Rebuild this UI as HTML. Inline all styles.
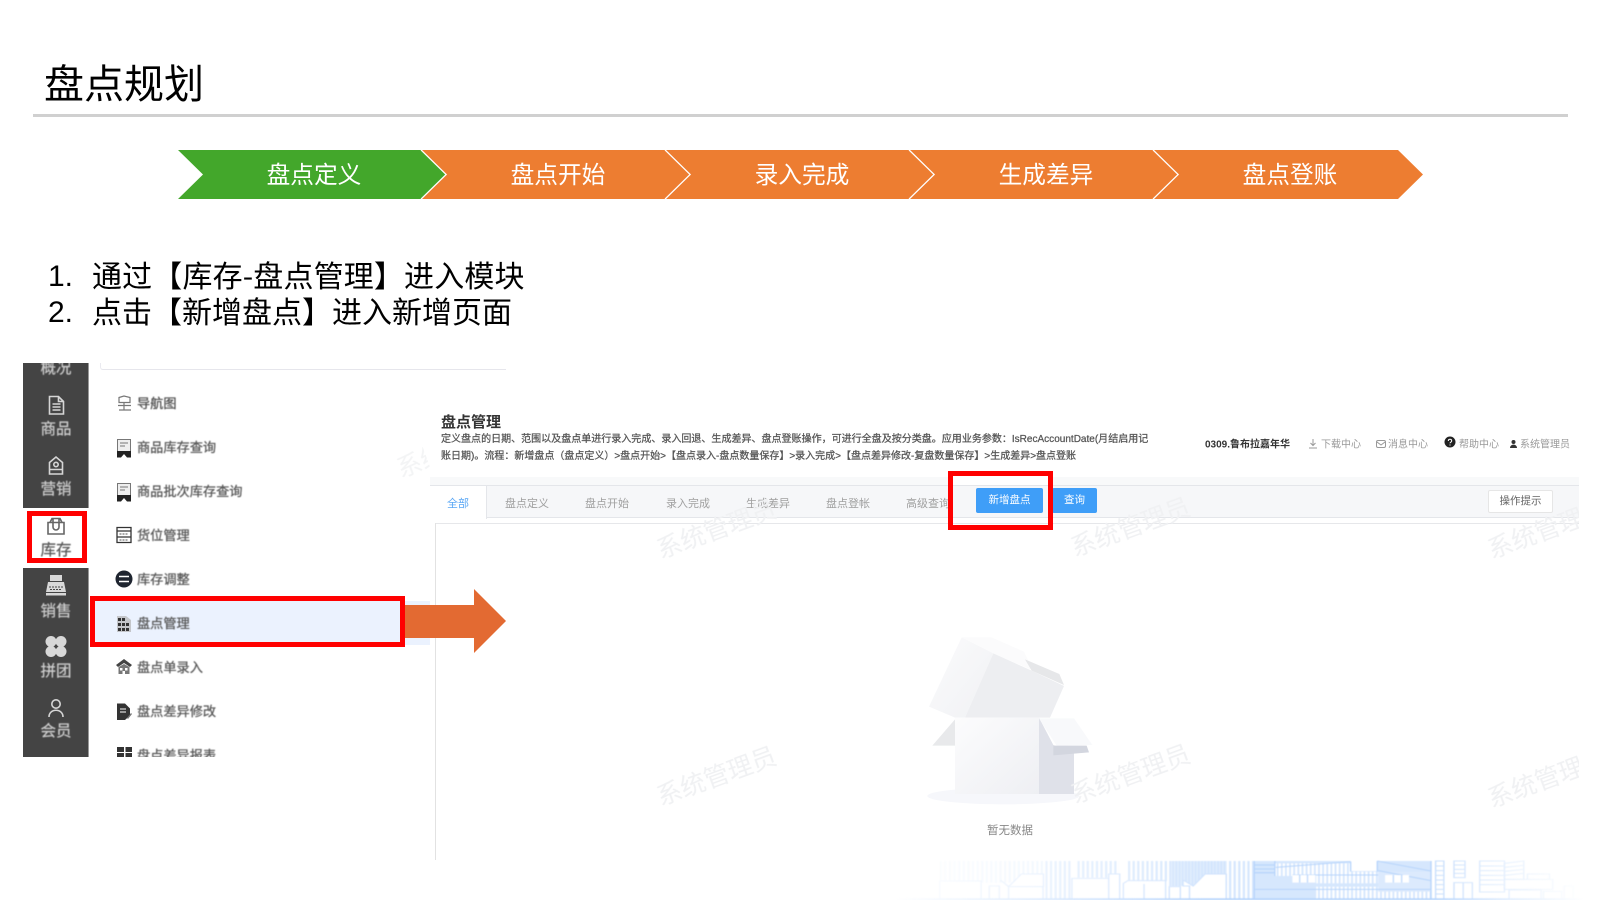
<!DOCTYPE html>
<html lang="zh"><head><meta charset="utf-8"><title>盘点规划</title>
<style>
html,body{margin:0;padding:0;background:#fff}
#p{position:relative;width:1600px;height:900px;overflow:hidden;background:#fff;font-family:"Liberation Sans","Noto Sans CJK SC",sans-serif}
.a{position:absolute;white-space:nowrap}
.c{transform:translate(-50%,-50%)}
.s{position:absolute;left:23px;width:66px;background:#444;border-right:1px solid #999;box-sizing:border-box;overflow:hidden}
.sl{position:absolute;left:56px;font-size:15.5px;line-height:20px;color:#cfcfcf;transform:translate(-50%,-50%);white-space:nowrap;filter:blur(.4px);-webkit-text-stroke:.2px #cfcfcf}
.m{position:absolute;left:137px;font-size:13.2px;line-height:18px;color:#555;transform:translateY(-50%);white-space:nowrap;filter:blur(.4px);-webkit-text-stroke:.25px #555}
.wm{position:absolute;font-size:25px;color:#f0f1f3;transform:translate(-50%,-50%) rotate(-20deg);white-space:nowrap;filter:blur(.3px)}
.tab{position:absolute;top:503px;font-size:11px;color:#a0a0a0;transform:translate(-50%,-50%);white-space:nowrap;filter:blur(.3px)}
.h{position:absolute;top:444px;font-size:10px;color:#999;transform:translateY(-50%);white-space:nowrap;filter:blur(.25px)}
.t{font-size:23.700px;color:#fff;font-family:'Noto Sans CJK SC',sans-serif;font-weight:400;top:173px}
svg{position:absolute;overflow:visible}
</style></head><body><div id="p">

<div class="a" style="left:44px;top:52px;font-size:40px;line-height:58px;color:#000;font-family:'Noto Sans CJK SC',sans-serif">盘点规划</div>
<div class="a" style="left:33px;top:114px;width:1535px;height:3px;background:#d0d0d0"></div>

<svg style="left:0;top:0" width="1600" height="260">
<polygon points="178,150 421,150 446,174.5 421,199 178,199 203,174.5" fill="#43a72b"/>
<polygon points="422,150 665,150 690,174.5 665,199 422,199 447,174.5" fill="#ed7d31"/>
<polygon points="666,150 909,150 934,174.5 909,199 666,199 691,174.5" fill="#ed7d31"/>
<polygon points="910,150 1153,150 1178,174.5 1153,199 910,199 935,174.5" fill="#ed7d31"/>
<polygon points="1154,150 1398,150 1423,174.5 1398,199 1154,199 1179,174.5" fill="#ed7d31"/>
<polyline points="421,150 446,174.5 421,199" fill="none" stroke="#fff" stroke-width="1.2"/>
<polyline points="665,150 690,174.5 665,199" fill="none" stroke="#fff" stroke-width="1.2"/>
<polyline points="909,150 934,174.5 909,199" fill="none" stroke="#fff" stroke-width="1.2"/>
<polyline points="1153,150 1178,174.5 1153,199" fill="none" stroke="#fff" stroke-width="1.2"/>
</svg>
<div class="a c t" style="left:314px">盘点定义</div>
<div class="a c t" style="left:558px">盘点开始</div>
<div class="a c t" style="left:802px">录入完成</div>
<div class="a c t" style="left:1046px">生成差异</div>
<div class="a c t" style="left:1290px">盘点登账</div>

<div class="a" style="left:48px;top:259px;font-size:30px;line-height:36px;color:#000;font-family:'Liberation Sans','Noto Sans CJK SC',sans-serif">1.</div>
<div class="a" style="left:92px;top:256px;font-size:30px;line-height:36px;color:#000;font-family:'Noto Sans CJK SC',sans-serif;letter-spacing:.15px">通过【库存-盘点管理】进入模块</div>
<div class="a" style="left:48px;top:295px;font-size:30px;line-height:36px;color:#000;font-family:'Liberation Sans','Noto Sans CJK SC',sans-serif">2.</div>
<div class="a" style="left:92px;top:292px;font-size:30px;line-height:36px;color:#000;font-family:'Noto Sans CJK SC',sans-serif">点击【新增盘点】进入新增页面</div>

<!-- sidebar -->
<div class="s" style="top:363px;height:145px"></div>
<div class="s" style="top:568px;height:189px"></div>
<div style="position:absolute;left:23px;top:363px;width:66px;height:20px;overflow:hidden"><div class="sl" style="left:33px;top:6px">概况</div></div>
<div class="sl" style="top:430px">商品</div>
<div class="sl" style="top:490px">营销</div>
<div class="sl" style="top:551px;color:#555;-webkit-text-stroke:.2px #555">库存</div>
<div class="sl" style="top:612px">销售</div>
<div class="sl" style="top:672px">拼团</div>
<div class="sl" style="top:732px">会员</div>

<svg style="left:0;top:0" width="100" height="760" fill="none" stroke="#d5d5d5" stroke-width="1.6">
<path d="M49.5 396.500h9l5 5v12.500h-14zM58.500 396.500v5h5M52.500 404h8M52.500 407h8M52.500 410h8"/>
<path d="M49.500 462.500l6.500-5.500 6.500 5.500v11.500h-13zM49.500 469.500h13"/><circle cx="56" cy="464.500" r="2.200"/>
<g stroke="#666"><path d="M48 522.500h16v11.500h-16zM50 522.500l2-4h8l2 4M53 518.500v8.500a3 3 0 0 0 6 0v-8.500"/></g>
<g fill="#d8d8d8" stroke="none">
<path d="M50 575h12v6h-12zM48 582h16l2 10h-20zM46 593h20v2.500h-20z"/>
<circle cx="51" cy="641.500" r="5.500"/><circle cx="61" cy="641.500" r="5.500"/><circle cx="51" cy="651.500" r="5.500"/><circle cx="61" cy="651.500" r="5.500"/>
</g>
<path d="M49 587h14M50 589.500h12" stroke="#444" stroke-width="1" stroke-dasharray="2 1"/>
<circle cx="56" cy="704" r="4.200"/><path d="M49 717c0-9 14-9 14 0"/>
</svg>

<!-- red 库存 box -->
<div class="a" style="left:27px;top:511px;width:60px;height:52px;border:5px solid #f00;box-sizing:border-box"></div>

<!-- top rule of menu -->
<div class="a" style="left:100px;top:363px;width:406px;height:7px;border-left:1px solid #eaeaf0;border-bottom:1px solid #e6e6ec;border-bottom-left-radius:3px;box-sizing:border-box"></div>

<!-- highlight -->
<div class="a" style="left:95px;top:601px;width:335px;height:44px;background:#ebf2fe"></div>

<div class="m" style="top:404px;color:#444">导航图</div>
<div class="m" style="top:448px">商品库存查询</div>
<div class="m" style="top:492px">商品批次库存查询</div>
<div class="m" style="top:536px">货位管理</div>
<div class="m" style="top:580px">库存调整</div>
<div class="m" style="top:624px">盘点管理</div>
<div class="m" style="top:668px">盘点单录入</div>
<div class="m" style="top:712px">盘点差异修改</div>
<div style="position:absolute;left:100px;top:740px;width:200px;height:17px;overflow:hidden"><div class="m" style="left:37px;top:16px">盘点差异报表</div></div>

<svg style="left:0;top:0" width="140" height="760">
<g fill="none" stroke="#777" stroke-width="1.200">
<path d="M119 397.500l5-1.500 6 1.500v5h-11zM118 405.500h13M119 410h12M124 403v7"/>
</g>
<g>
<path d="M117.500 439.500h13v12h-13z" fill="#eee" stroke="#777"/><path d="M120 443h8M120 446h5" stroke="#777"/><path d="M117 451h14v6.500h-4l-3-3.500-3 3.500h-4z" fill="#222"/>
<path d="M117.500 483.500h13v12h-13z" fill="#eee" stroke="#777"/><path d="M120 487h8M120 490h5" stroke="#777"/><path d="M117 495h14v6.500h-4l-3-3.500-3 3.500h-4z" fill="#222"/>
<path d="M117 527.500h14v15h-14zM117 531h14M117 537h14" fill="none" stroke="#333" stroke-width="1.300"/><path d="M119.500 534h9M119.500 540h9" stroke="#555" stroke-dasharray="2 1"/>
<circle cx="124" cy="579" r="8.500" fill="#1f2530"/><path d="M119 576.500h10M129 581.500h-10" stroke="#fff" stroke-width="1.600"/>
<path d="M117 616h9l5 4v12h-14z" fill="#c4c6ca"/><path d="M118 618h3v3h-3zM122 618h3v3h-3zM118 623h3v3h-3zM122 623h3v3h-3zM126 623h3v3h-3zM118 628h3v3h-3zM122 628h3v3h-3zM126 628h3v3h-3z" fill="#333"/>
<path d="M116 665l8-6 8 6-2 2-6-4-6 4z" fill="#444"/><path d="M118.500 667l5.500-3 5.500 3v7h-11z" fill="#777"/><path d="M120 668h2.500v2.500h-2.500zM125 668h2.500v2.500h-2.500zM122.500 671h2.500v3h-2.500z" fill="#fff"/>
<path d="M117 703.500h8l5 5v7l-5 4.500h-8z" fill="#333"/><path d="M120 709h6M120 712h6" stroke="#fff"/><path d="M127 718l4-5 1 1-4 5z" fill="#777"/>
<path d="M117 747h7v5h-7zM125.500 747h6.500v5h-6.500zM117 753h7v4h-7zM125.500 753h6.500v4h-6.500z" fill="#333"/>
</g>
</svg>

<!-- right page -->
<div class="wm" style="left:456px;top:447px;color:#f3f4f5;clip-path:inset(0 75% 0 0)">系统管理员</div>

<div class="a" style="left:441px;top:423px;font-size:15px;line-height:20px;font-weight:bold;color:#333;transform:translateY(-50%);filter:blur(.3px)">盘点管理</div>
<div class="a" style="left:441px;top:440px;font-size:10.030px;line-height:14px;color:#555;transform:translateY(-50%);-webkit-text-stroke:.25px #555;filter:blur(.25px)">定义盘点的日期、范围以及盘点单进行录入完成、录入回退、生成差异、盘点登账操作，可进行全盘及按分类盘。应用业务参数：IsRecAccountDate(月结启用记</div>
<div class="a" style="left:441px;top:457px;font-size:10px;line-height:14px;color:#555;transform:translateY(-50%);-webkit-text-stroke:.25px #555;filter:blur(.25px)">账日期)。流程：新增盘点（盘点定义）&gt;盘点开始&gt;【盘点录入-盘点数量保存】&gt;录入完成&gt;【盘点差异修改-复盘数量保存】&gt;生成差异&gt;盘点登账</div>

<div class="h" style="left:1205px;top:443px;color:#333;font-weight:bold;font-size:10px">0309.鲁布拉嘉年华</div>
<div class="h" style="left:1321px;top:443px">下载中心</div>
<div class="h" style="left:1388px;top:443px">消息中心</div>
<div class="h" style="left:1459px;top:443px">帮助中心</div>
<div class="h" style="left:1520px;top:443px">系统管理员</div>
<svg style="left:0;top:0" width="1600" height="460" fill="none" stroke="#999" stroke-width="1">
<path d="M1313 439v6M1310.500 443l2.500 2.500 2.500-2.500M1309 448h8"/>
<rect x="1376.500" y="440.500" width="9" height="7" rx="1.500"/><path d="M1377 442l4 3 4-3"/>
<circle cx="1450" cy="442" r="5.500" fill="#222" stroke="none"/><path d="M1448.300 441c0-2.300 3.400-2.300 3.400 0 0 1.200-1.700 1.200-1.700 2.300M1450 444.500v1" stroke="#fff"/>
<circle cx="1513.500" cy="442" r="2" fill="#333" stroke="none"/><path d="M1510 448c0-4.500 7-4.500 7 0z" fill="#333" stroke="none"/>
</svg>

<!-- tab bar -->
<div class="a" style="left:430px;top:477px;width:1149px;height:8px;background:#f8f9fa"></div>
<div class="a" style="left:430px;top:485px;width:1149px;height:33px;background:#f6f7f9;border-top:1px solid #e4e6ea;border-bottom:1px solid #e4e6ea;box-sizing:border-box"></div>
<div class="a" style="left:430px;top:485px;width:57px;height:34px;background:#fff;border-top:1px solid #e4e6ea;border-right:1px solid #e4e6ea;box-sizing:border-box"></div>
<div class="a" style="left:435px;top:523px;width:1144px;height:1px;background:#e6e7ea"></div>
<div class="a" style="left:435px;top:523px;width:1px;height:337px;background:#e2e2e2"></div>

<div class="tab" style="left:458px;color:#5aa7f5">全部</div>
<div class="tab" style="left:527px">盘点定义</div>
<div class="tab" style="left:607px">盘点开始</div>
<div class="tab" style="left:688px">录入完成</div>
<div class="tab" style="left:768px">生成差异</div>
<div class="tab" style="left:848px">盘点登帐</div>
<div class="tab" style="left:928px">高级查询</div>

<div class="wm" style="left:716px;top:528px">系统管理员</div>
<div class="wm" style="left:1130px;top:526px">系统管理员</div>
<div style="position:absolute;left:1460px;top:490px;width:119px;height:80px;overflow:hidden"><div class="wm" style="left:87px;top:38px">系统管理员</div></div>
<div class="wm" style="left:716px;top:775px">系统管理员</div>
<div style="position:absolute;left:1460px;top:730px;width:119px;height:90px;overflow:hidden"><div class="wm" style="left:87px;top:47px">系统管理员</div></div>

<div class="a" style="left:948px;top:471px;width:105px;height:14px;background:#fff"></div>
<div class="a" style="left:951px;top:485px;width:100px;height:33px;background:#f6f7f9;border-top:1px solid #e4e6ea;border-bottom:1px solid #e4e6ea;box-sizing:border-box"></div>
<div class="a" style="left:976px;top:488px;width:67px;height:25px;background:#3f9ef8;border-radius:2px;color:#fff;font-size:10.500px;line-height:25px;text-align:center;filter:blur(.25px)">新增盘点</div>
<div class="a" style="left:1052px;top:488px;width:45px;height:25px;background:#3f9ef8;border-radius:2px;color:#fff;font-size:10.500px;line-height:25px;text-align:center;filter:blur(.25px)">查询</div>
<div class="a" style="left:1488px;top:490px;width:65px;height:23px;background:#fff;border:1px solid #e6e6e6;border-radius:2px;box-sizing:border-box;color:#666;font-size:10.500px;line-height:21px;text-align:center;filter:blur(.25px)">操作提示</div>
<div class="a" style="left:948px;top:471px;width:105px;height:59px;border:5px solid #f00;box-sizing:border-box"></div>

<!-- empty box illustration -->
<svg style="left:860px;top:600px" width="300" height="240" viewBox="0 0 900 720">
<defs>
<linearGradient id="g1" x1="0" y1="0" x2="1" y2="1"><stop offset="0" stop-color="#fcfcfd"/><stop offset="1" stop-color="#eeeff3"/></linearGradient>
<linearGradient id="g2" x1="0" y1="0" x2="1" y2="1"><stop offset="0" stop-color="#fbfbfc"/><stop offset="1" stop-color="#f0f1f4"/></linearGradient>
</defs>
<ellipse cx="430" cy="588" rx="228" ry="25" fill="#f6f7fb"/>
<polygon points="305,112 395,112 492,155 520,212 400,160" fill="#fbfbfc"/>
<polygon points="305,112 400,160 315,353 285,353 207,320" fill="url(#g2)"/>
<polygon points="400,160 515,212 612,258 570,353 315,353" fill="#edeef1"/>
<polygon points="495,178 598,222 612,255 515,212" fill="#e6e7e9"/>
<polygon points="285,353 537,353 537,582 285,582" fill="url(#g1)"/>
<polygon points="537,353 580,435 642,460 642,582 537,582" fill="#dfe1e9"/>
<polygon points="285,358 217,437 285,437" fill="#e8e9eb"/>
<polygon points="537,355 642,355 697,435 590,437" fill="#f8f9fb"/>
<polygon points="580,437 680,437 687,457 580,466" fill="#d3d6df"/>
</svg>
<div class="wm" style="left:1130px;top:773px">系统管理员</div>
<div class="a c" style="left:1010px;top:830px;font-size:11.500px;color:#888;filter:blur(.25px)">暂无数据</div>

<!-- skyline -->
<svg style="left:880px;top:830px;filter:blur(.4px)" width="720" height="70" viewBox="0 0 1568 210" preserveAspectRatio="none">
<defs>
<pattern id="v" width="10" height="10" patternUnits="userSpaceOnUse"><rect width="5" height="10" fill="#d6e7fd"/></pattern>
<pattern id="vd" width="7" height="10" patternUnits="userSpaceOnUse"><rect width="7" height="10" fill="#d6e7fd"/><rect width="2.500" height="10" fill="#c3dbfc"/></pattern>
<pattern id="vl" width="9" height="10" patternUnits="userSpaceOnUse"><rect width="9" height="10" fill="#fff"/><rect width="4" height="10" fill="#d5e6fd"/></pattern>
<linearGradient id="fd"><stop offset="0.02" stop-color="#000"/><stop offset="0.25" stop-color="#888"/><stop offset="0.45" stop-color="#fff"/><stop offset="0.77" stop-color="#fff"/><stop offset="0.88" stop-color="#666"/><stop offset="0.98" stop-color="#000"/></linearGradient>
<mask id="mk" maskUnits="userSpaceOnUse" x="0" y="0" width="1568" height="210"><rect width="1568" height="210" fill="url(#fd)"/></mask>
</defs>
<g mask="url(#mk)">
<rect x="130" y="93" width="230" height="65" fill="url(#v)" opacity=".6"/>
<rect x="360" y="93" width="55" height="115" fill="url(#v)"/>
<rect x="430" y="93" width="90" height="50" fill="url(#v)"/>
<rect x="540" y="93" width="85" height="60" fill="url(#v)"/>
<rect x="630" y="93" width="125" height="75" fill="url(#vd)" opacity=".8"/>
<rect x="760" y="93" width="55" height="115" fill="url(#v)"/>
<g fill="#fff" stroke="#cfe2fd" stroke-width="3">
<path d="M130 153h90v55h-90zM238 168h22v40h-22zM280 170h75v38h-75zM262 150l18 20 28-38h48v38h-75z"/>
<path d="M418 145h80v63h-80zM498 132h24v76h-24zM530 160l10-8h82v56h-92zM575 162v46M630 170h24v38h-24zM660 150l22 18 26-36h46v76h-80v-40h-14z"/>
</g>
<rect x="815" y="93" width="385" height="115" fill="#d6e7fd"/>
<rect x="950" y="170" width="250" height="38" fill="url(#vl)"/>
<rect x="860" y="100" width="165" height="38" fill="url(#vl)"/>
<rect x="950" y="125" width="135" height="35" fill="url(#vl)"/>
<rect x="1085" y="125" width="115" height="60" fill="#dceafd"/>
<path d="M1025 93h58v30h-58z" fill="#fff"/>
<path d="M862 112l163-17M898 135h187M815 178h385M1083 93l117 30M1085 122l115 30M815 93v115M860 93v45M1200 93v115M1025 95v30M1083 93v32" stroke="#b8d5fb" stroke-width="3" fill="none"/>
<path d="M815 105h45M815 117h45M815 128h45" stroke="#b8d5fb" stroke-width="4"/>
<path d="M898 135h50v23h-50zM1100 135h52v23h-52z" fill="#fff"/>
<path d="M914 135v23M931 135v23M1118 135v23M1136 135v23" stroke="#c3dbfc" stroke-width="3"/>
<g fill="none" stroke="#c9dffc" stroke-width="3">
<path d="M1210 93h18v115h-18zM1250 93h24v50h-24zM1250 158h40v50h-40zM1270 158v50"/>
<path d="M1210 108h18M1210 122h18M1210 136h18M1210 150h18M1210 164h18M1210 178h18M1210 192h18M1250 105h24M1250 118h24M1250 130h24"/>
<path d="M1306 93h54v93h-54zM1306 108h54M1306 122h54M1306 136h54M1306 150h54M1306 164h54"/>
<path d="M1360 100l42-7v55h-42zM1360 112l42-6M1360 124l42-6M1360 136l42-6"/>
<path d="M1360 148h105v30h-105zM1410 132h48v16h-48zM1370 180h70v28h-70zM1445 184h40v24h-40zM1490 168h20v40h-20z"/>
</g>
<rect x="30" y="205" width="1500" height="5" fill="#b4d3fc"/>
</g>
</svg>

<!-- orange arrow -->
<svg style="left:0;top:0" width="520" height="660"><polygon points="405,605 474,605 474,589 506,621 474,653 474,638 405,638" fill="#e36a32"/></svg>
<!-- red menu box -->
<div class="a" style="left:90px;top:596px;width:315px;height:51px;border:5px solid #f00;box-sizing:border-box"></div>

</div></body></html>
